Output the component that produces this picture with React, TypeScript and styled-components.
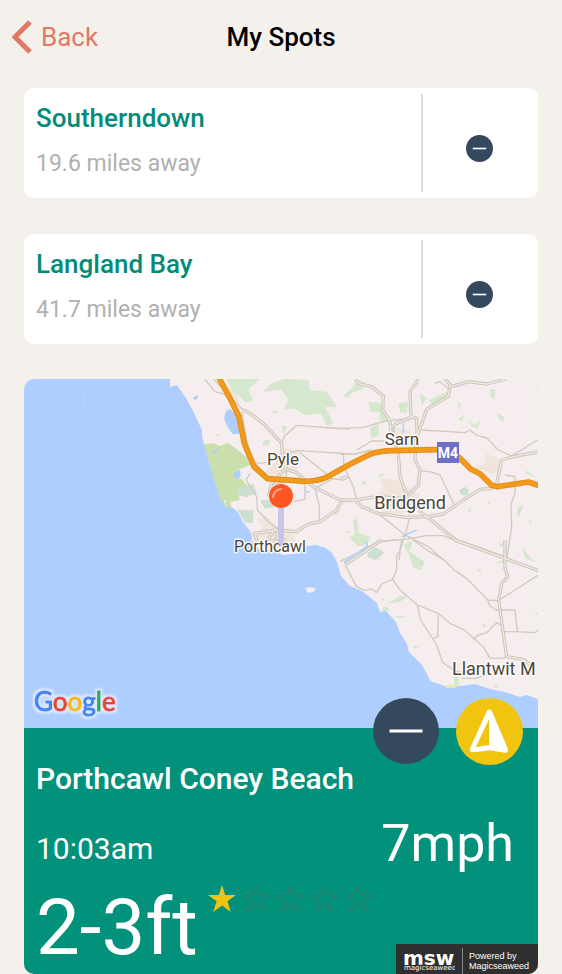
import React from "react";
import styled, { createGlobalStyle, css } from "styled-components";

const GlobalStyle = createGlobalStyle`
  * { box-sizing: border-box; }
  body {
    margin: 0;
    background: #f4f1ec;
    font-family: Roboto, "Liberation Sans", sans-serif;
  }
  button { font: inherit; border: 0; padding: 0; cursor: pointer; }
  h1, h2, p { margin: 0; }
`;

const Header = styled.header`
  display: grid;
  grid-template-columns: 1fr auto 1fr;
  align-items: center;
  height: 74px;
  padding: 0 12px;
`;

const BackButton = styled.button`
  display: flex;
  align-items: center;
  gap: 9px;
  justify-self: start;
  background: none;
  color: #e27866;
  font-size: 26px;
  line-height: 32px;
`;

const PageTitle = styled.h1`
  font-size: 26px;
  line-height: 32px;
  font-weight: 500;
  color: #000;
`;

const Content = styled.main`
  display: flex;
  flex-direction: column;
  gap: 35px;
  padding: 14px 24px 0;
`;

const SpotList = styled.div`
  display: flex;
  flex-direction: column;
  gap: 36px;
`;

const SpotCard = styled.article`
  display: flex;
  align-items: center;
  height: 110px;
  border-radius: 10px;
  background: #fff;
`;

const SpotText = styled.div`
  flex: 1;
  align-self: flex-start;
  display: flex;
  flex-direction: column;
  gap: 14px;
  padding: 14px 12px 0;
`;

const SpotName = styled.h2`
  font-size: 26px;
  line-height: 32px;
  font-weight: 500;
  color: #048b78;
`;

const Distance = styled.p`
  font-size: 23px;
  line-height: 32px;
  color: #b0b0b0;
`;

const SpotAction = styled.div`
  display: flex;
  align-items: center;
  justify-content: center;
  width: 117px;
  height: 98px;
  border-left: 2px solid #dcdcdc;
  padding: 10px 2px 0 0;
`;

const RoundButton = styled.button<{ $size: number; $tone: "navy" | "yellow" }>`
  display: block;
  width: ${(p) => p.$size}px;
  height: ${(p) => p.$size}px;
  border-radius: 50%;
  background: ${(p) => (p.$tone === "navy" ? "#34495e" : "#f1c40f")};
  svg { display: block; width: 100%; height: 100%; }
`;

const FeaturedCard = styled.article`
  border-radius: 10px;
  overflow: hidden;
`;

const MapArea = styled.div`
  height: 349px;
  background: #aeceff;
  svg { display: block; width: 100%; height: 100%; }
`;

const Forecast = styled.section`
  position: relative;
  background: #02917b;
  color: #fff;
`;

const Actions = styled.div`
  position: absolute;
  top: -30px;
  right: 15px;
  display: flex;
  gap: 17px;
`;

const BeachName = styled.h2`
  padding: 31px 12px 0;
  font-size: 30px;
  line-height: 40px;
  font-weight: 500;
`;

const Conditions = styled.div`
  display: flex;
  align-items: center;
  justify-content: space-between;
  height: 86px;
  padding: 14px 24px 0 12px;
`;

const reading = css`
  font-weight: 400;
  white-space: nowrap;
`;

const Time = styled.time`
  ${reading}
  font-size: 30px;
  line-height: 40px;
`;

const Wind = styled.p`
  ${reading}
  font-size: 52px;
  line-height: 60px;
  padding-bottom: 10px;
`;

const Surf = styled.div`
  display: flex;
  align-items: flex-start;
  height: 89px;
  padding-left: 12px;
`;

const WaveHeight = styled.p`
  ${reading}
  font-size: 78px;
  line-height: 86px;
`;

const Rating = styled.div`
  display: flex;
  gap: 6px;
  padding-left: 10px;
  svg { display: block; width: 28px; height: 28px; }
`;

const Credit = styled.a`
  display: flex;
  align-items: center;
  align-self: flex-end;
  width: 142px;
  height: 30px;
  margin-left: auto;
  padding-left: 7px;
  background: #2f2f2f;
  color: #fff;
  text-decoration: none;
  font-family: "Liberation Sans", Arial, sans-serif;
  font-size: 9px;
  line-height: 10px;
`;

const CreditText = styled.span`
  margin: 4px 0 0 7px;
  padding: 3px 0 0 6px;
  border-left: 1px solid #8a8a8a;
  height: 26px;
`;

const MinusIcon = ({ weight }: { weight: number }) => (
  <svg viewBox="0 0 66 66" aria-hidden="true">
    <path d="M16.5 33h33" stroke="#fff" strokeWidth={weight} />
  </svg>
);

const CompassIcon = () => (
  <svg viewBox="0 0 201 201" aria-hidden="true">
    <path
      d="M100 43L50 154Q74 152 99 148Q126 153 148 156Z"
      fill="#fff" stroke="#fff" strokeWidth="17" strokeLinejoin="round"
    />
    <path d="M99 64V142Q78 144 59 148Z" fill="#f1c40f" />
  </svg>
);

const Star = ({ filled }: { filled: boolean }) => (
  <svg viewBox="0 0 28 28" aria-hidden="true">
    <path
      d={filled
        ? "M14 0L17.2 10H28L19.4 16.2L22.8 27L14 20.6L5.2 27L8.6 16.2L0 10H10.8Z"
        : "M14 1.5L17 10.7H27L19 16.5L22.2 26.2L14 20.2L5.8 26.2L9 16.5L1 10.7H11Z"}
      fill={filled ? "#f1c40f" : "none"}
      stroke={filled ? "none" : "#457a74"}
      strokeWidth="1"
    />
  </svg>
);

const Roads = ({ d, width = 4 }: { d: string; width?: number }) => (
  <path d={d} fill="none" stroke="#d0cabf" strokeWidth={width} strokeLinejoin="round" />
);

const MainRoads = ({ d }: { d: string }) => (
  <g fill="none" strokeLinejoin="round">
    <path d={d} stroke="#cbc6ba" strokeWidth="10" />
    <path d={d} stroke="#efe9e2" strokeWidth="4" />
  </g>
);

const MOTORWAY =
  "M205 20L240 85L266 138L274 175L283 220L312 290L352 326L440 332Q490 338 530 322L600 283L660 253Q685 243 730 242L860 239H900L930 265L962 297L990 311L1025 346L1042 350L1135 336L1170 348";

const SpotMap = () => (
  <svg viewBox="24 379 514 349" preserveAspectRatio="xMidYMid slice" role="img" aria-label="Map of Porthcawl">
    <defs>
      <filter id="halo" x="-10%" y="-20%" width="120%" height="140%">
        <feMorphology in="SourceAlpha" operator="dilate" radius="2" result="spread" />
        <feGaussianBlur in="spread" stdDeviation="1" result="soft" />
        <feFlood floodColor="#dce9fc" />
        <feComposite in2="soft" operator="in" result="glow" />
        <feMerge>
          <feMergeNode in="glow" />
          <feMergeNode in="SourceGraphic" />
        </feMerge>
      </filter>
    </defs>
    <path
      fill="#f6eeee"
      d="M170 379V387L177 385L186 398L194 413L202 430V437L204 443L209 462L216 480L224 500L225 507L231 507L237 511L243 522L250 531L255 546L263 552L272 549L283 555L300 553L307 546L316 545L326 548L332 553L337 562L341 576L350 586L362 591L377 603L380 612L386 611L396 622L400 633L407 644L409 652L422 665L428 676L430 681L445 686H460L475 684L490 689L505 692L520 697L527 695L560 708V370H170Z"
    />
    <path d="M83 389V415" stroke="#bcd3f7" />
    <path d="M305 588L311 587L316 589L313 592L308 593Z" fill="#f6eeee" />

    <g transform="translate(150 370) scale(.333333)">
      <path fill="#efe5dc" d="M320 448L350 438L385 478L430 488L440 515L385 550L300 510L340 470ZM365 290L395 235L450 240L440 300L370 318L340 310ZM230 50L260 60L270 110L240 90Z" />
      <path fill="#cbdfad" d="M162 222L190 220L210 228L235 218L290 262L300 285L262 300L255 322L275 328L290 345L265 370L270 390L240 395L245 413L225 410L228 390L213 395L190 320Z" />
      <path fill="#cce0cf" d="M270 350L310 342L320 370L290 382L260 375ZM262 418L312 422L308 460L285 458ZM330 392L370 388L372 412L345 416Z" />
      <path fill="#d5e7cd" d="M230 27H330L295 60L310 90L290 100L245 60ZM365 40L405 27L475 30L480 60L530 65L560 110L525 112L550 160L530 168L512 130L465 135L430 115L400 120L415 90L395 60L340 65ZM340 212L360 210L358 225L338 228ZM395 165L412 170L400 195ZM365 125L385 120L375 132ZM195 192L215 195L205 199ZM550 425L570 420L555 438ZM585 485L600 482L598 490Z" />
      <path fill="#aeceff" d="M128 82L145 75L143 85L134 91ZM228 123L240 116L262 140L268 192H248L232 170L222 145ZM185 245L212 230L195 248ZM250 310L270 298L272 320L258 328ZM465 364L480 362L474 370Z" />
      <Roads d="M165 28L195 65L220 72L245 76M190 27L240 80L280 120M275 125L290 210L300 265L320 285L355 320M395 220L402 200L440 166L545 174L600 177M400 250L450 242L600 252M450 248L540 320L545 328L495 355M540 325L580 330L600 320M320 280L350 278M300 310L288 330L320 380L322 420L360 460L380 475M430 395L465 388V330M495 355L508 410V452M360 345L405 335L410 300M380 468L375 520" />
      <MainRoads d="M280 120L300 130L340 160L395 220L397 250L410 285L405 298L365 340L355 380M410 298L440 308L490 350L575 392H600M575 392L560 420L510 455L475 462L440 485L385 480L312 490L325 520M380 470L350 515L410 510" />
    </g>

    <g transform="translate(340 370) scale(.333333)">
      <path fill="#efe5dc" d="M120 325L175 330L180 345L205 350L240 375L210 430L130 430L110 375L130 355ZM385 295L430 285L440 250L480 270L488 295L455 315L430 300ZM150 170L210 180L235 220L225 245L170 235Z" />
      <path fill="#d5e7cd" d="M12 75L40 50L50 28L80 40L65 58L35 70L20 85ZM85 95L120 100L130 128L90 125ZM175 100L205 95L200 130L180 125ZM240 70L260 85L245 108ZM265 90L320 65L325 80L300 95L280 108ZM450 60L465 55L464 88L452 80ZM470 130L492 140L490 155L480 152ZM390 155L405 165L420 150L415 175L395 170ZM352 95L362 100L360 122ZM90 175L115 160L118 195L95 205ZM555 300L592 325L560 312ZM355 145L372 135L365 155ZM535 410L550 405L538 440L530 430ZM435 405L452 390L450 402ZM65 340L80 330L75 345ZM115 318L138 305L120 325ZM38 455L50 444L58 490L92 500L82 520L55 530L30 505L45 490ZM200 515L218 515L208 540ZM475 520L498 518L485 532ZM545 528L568 560L558 558ZM382 420L395 412L390 430ZM565 455L577 450L570 462ZM120 125L150 140L146 158L118 150Z" />
      <path fill="#cce0cf" d="M358 360L375 350L388 362L378 378L362 372ZM88 548L110 532L132 548L112 568L82 560Z" />
      <path d="M190 160V190M162 165V188M185 500L230 480M15 575L80 532V518M355 48L375 40" fill="none" stroke="#b4d2ff" strokeWidth="5" />
      <Roads d="M0 175L70 172L140 152L215 145M50 240L95 213H140M0 252H45L95 240M10 253L12 290L40 350L50 390M245 180L375 188L390 180L410 196L440 204L475 240L515 258L592 210M240 302L270 305L300 315L345 410M120 435L195 495L265 530L310 570M210 440L195 495L180 540L178 570M0 575L60 545L115 515L195 508L260 497H310L355 515M500 570L515 470L513 402L525 370V320L495 315M330 60L300 35L285 40M0 325L25 315" />
      <MainRoads d="M45 28L60 42L95 50L130 78L128 120L150 155L152 180L175 250L180 320L200 375L210 435M235 28L210 65L213 140L230 145L232 240M330 48L325 78L260 118L240 175L228 210L225 270L240 300L235 345L205 375M310 20L335 50L385 35L440 42L500 27M150 175L170 160L220 140M0 390H45L110 380L190 385M45 390L65 410L115 430L200 442L265 440L310 432L370 390L420 358L455 355L470 340L485 270L520 260L592 246M235 420L350 512L500 565" />
    </g>

    <g transform="translate(200 540) scale(.333333)">
      <path fill="#d5e7cd" d="M465 0H498L490 18L470 10ZM610 15L640 5L625 30L650 50L675 65L662 92L640 80L625 40ZM965 22L990 50L1010 68L975 55ZM833 92L842 84V98ZM890 70L910 58L915 70ZM540 180L555 170L550 182ZM560 192L600 168L625 168L600 185ZM585 228H615L610 234H592ZM640 318L655 320L645 330ZM845 248L857 256L852 265ZM880 440L898 430L890 445ZM548 205L560 198L568 212L545 214ZM1000 213L1013 218V226ZM760 412L775 410L778 435H765Z" />
      <path fill="#cce0cf" d="M502 40L525 22L550 35L525 60L505 52Z" />
      <path fill="#e4e8bd" d="M735 436L770 432L776 438L760 444H738Z" />
      <Roads d="M605 0L600 35L590 45V90L578 118L545 132L530 158L515 146L495 152L470 140L435 75M578 118L600 150L652 195L715 220L750 250L790 268L850 320L870 355H905L920 350M652 195L662 240L710 315L728 368L765 392L795 400M715 220L713 290L700 295M640 0L680 30L730 58L765 92L800 115L863 180L895 182L1015 105M863 180L870 198L888 210H945L952 275H910M952 275L1005 278L1015 270M820 298L835 285L860 278L890 248L903 255M785 415H825L860 405M530 5L590 0" />
      <MainRoads d="M765 0L1015 92M915 0V85L923 110L905 130L896 180L905 245L920 350L970 358L995 378M435 75L460 58L545 0" />
      <path d="M500 5V20L432 68" fill="none" stroke="#b4d2ff" strokeWidth="5" />
    </g>

    <g transform="translate(150 370) scale(.333333)" fill="none" strokeLinejoin="round">
      <path d={MOTORWAY} stroke="#e58d13" strokeWidth="17" />
      <path d={MOTORWAY} stroke="#f39a1d" strokeWidth="11" />
    </g>

    <g fill="#4c4639" stroke="#fff" strokeOpacity=".8" strokeWidth="3" strokeLinejoin="round" paintOrder="stroke" fontFamily="Roboto, sans-serif" textAnchor="middle">
      <text x="283" y="465" fontSize="17">Pyle</text>
      <text x="402" y="445" fontSize="17">Sarn</text>
      <text x="410" y="509" fontSize="18">Bridgend</text>
      <text x="270" y="552" fontSize="16">Porthcawl</text>
      <text x="452" y="675" fontSize="18" textAnchor="start">Llantwit M</text>
    </g>
    <rect x="437" y="442" width="22" height="21" fill="#6f6fc7" />
    <text x="448" y="458" fill="#fff" fontSize="14" fontWeight="700" textAnchor="middle" fontFamily="Roboto, sans-serif">M4</text>
    <path d="M278 508V542Q281 550 284 542V508Z" fill="#c6c7e6" />
    <circle cx="281" cy="496" r="12" fill="#ff5722" />
    <path d="M273 497Q274 490 281 489" fill="none" stroke="#ffab91" strokeWidth="2" strokeLinecap="round" />

    <text x="34" y="711" fontSize="26" fontFamily="Lato, sans-serif" fontWeight="400" strokeWidth="1" filter="url(#halo)">
      <tspan fill="#4285f4" stroke="#4285f4">G</tspan><tspan fill="#ea4335" stroke="#ea4335">o</tspan><tspan fill="#fbbc05" stroke="#fbbc05">o</tspan><tspan fill="#4285f4" stroke="#4285f4">g</tspan><tspan fill="#34a853" stroke="#34a853">l</tspan><tspan fill="#ea4335" stroke="#ea4335">e</tspan>
    </text>
  </svg>
);

const MswLogo = () => (
  <svg width="52" height="28" viewBox="0 0 52 28" aria-hidden="true">
    <text x="0" y="20" fill="#fff" fontSize="20" fontWeight="700" fontFamily="DejaVu Sans, sans-serif">msw</text>
    <text x="1" y="25" fill="#fff" stroke="#2f2f2f" strokeWidth="1" paintOrder="stroke" fontSize="7" fontFamily="DejaVu Sans, sans-serif">magicseaweed</text>
  </svg>
);

const spots = [
  { name: "Southerndown", distance: "19.6 miles away" },
  { name: "Langland Bay", distance: "41.7 miles away" },
];

export default function App() {
  return (
    <>
      <GlobalStyle />
      <Header>
        <BackButton type="button">
          <svg width="20" height="34" viewBox="0 0 20 34" aria-hidden="true">
            <path d="M18 2L3 17L18 32" fill="none" stroke="#e27866" strokeWidth="5" />
          </svg>
          Back
        </BackButton>
        <PageTitle>My Spots</PageTitle>
      </Header>
      <Content>
        <SpotList>
          {spots.map((spot) => (
            <SpotCard key={spot.name}>
              <SpotText>
                <SpotName>{spot.name}</SpotName>
                <Distance>{spot.distance}</Distance>
              </SpotText>
              <SpotAction>
                <RoundButton type="button" $size={27} $tone="navy" aria-label={`Remove ${spot.name}`}>
                  <MinusIcon weight={4} />
                </RoundButton>
              </SpotAction>
            </SpotCard>
          ))}
        </SpotList>
        <FeaturedCard>
          <MapArea><SpotMap /></MapArea>
          <Forecast>
            <Actions>
              <RoundButton type="button" $size={66} $tone="navy" aria-label="Remove Porthcawl Coney Beach">
                <MinusIcon weight={3} />
              </RoundButton>
              <RoundButton type="button" $size={67} $tone="yellow" aria-label="Wind direction">
                <CompassIcon />
              </RoundButton>
            </Actions>
            <BeachName>Porthcawl Coney Beach</BeachName>
            <Conditions>
              <Time>10:03am</Time>
              <Wind>7mph</Wind>
            </Conditions>
            <Surf>
              <WaveHeight>2-3ft</WaveHeight>
              <Rating role="img" aria-label="1 out of 5 stars">
                {[0, 1, 2, 3, 4].map((i) => <Star key={i} filled={i < 1} />)}
              </Rating>
              <Credit href="#magicseaweed">
                <MswLogo />
                <CreditText>Powered by<br />Magicseaweed</CreditText>
              </Credit>
            </Surf>
          </Forecast>
        </FeaturedCard>
      </Content>
    </>
  );
}
